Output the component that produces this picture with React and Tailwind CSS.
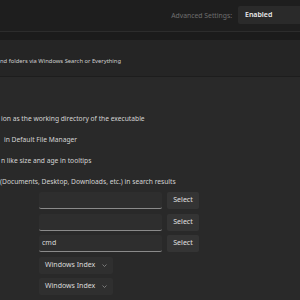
import React from 'react';

const font = { fontFamily: '"Noto Sans", "Open Sans", sans-serif' };

function PathRow({ value }) {
  return (
    <div className="flex items-center gap-[5px] h-[17px]">
      <div className="w-[123px] h-full bg-[#2e2e2e] rounded-[2px] border-b border-[#8a8a8a] flex items-center px-[3px] text-[7px] text-[#d8d8d8]">
        {value}
      </div>
      <button className="w-[32px] h-full bg-[#343434] rounded-[2px] text-[7px] text-[#e0e0e0] flex items-center justify-center">
        Select
      </button>
    </div>
  );
}

function IndexSelect() {
  return (
    <div className="w-[74px] h-[17px] bg-[#2f2f2f] rounded-[2px] flex items-center pl-[6px] text-[7px] text-[#dcdcdc]">
      <span>Windows Index</span>
      <svg className="ml-[7px]" width="5" height="3" viewBox="0 0 5 3" fill="none">
        <path d="M0.5 0.5 L2.5 2.5 L4.5 0.5" stroke="#9a9a9a" strokeWidth="0.7" />
      </svg>
    </div>
  );
}

export default function App() {
  return (
    <div style={font} className="w-[300px] h-[300px] overflow-hidden bg-[#292929] flex flex-col">
      {/* header */}
      <div className="h-[31px] shrink-0 bg-[#1e1e1e] flex items-center justify-end">
        <span className="text-[6.8px] text-[#6e6e6e] mr-[6px] mt-[2px]">Advanced Settings:</span>
        <div className="w-[62px] h-[18px] bg-[#2a2a2a] rounded-l-[2px] flex items-center pl-[7px] mt-[-1px] text-[7px] font-semibold text-[#ececec]">
          Enabled
        </div>
      </div>
      <div className="h-[9px] shrink-0 bg-[#1b1b1b] border-t border-[#2c2c2c]" />

      {/* search section */}
      <div className="h-[37px] shrink-0 bg-[#252525] border-b border-[#1d1d1d] pt-[17px] text-[5.8px] text-[#cfcfcf] whitespace-nowrap">
        nd folders via Windows Search or Everything
      </div>

      {/* options */}
      <div className="flex flex-col pt-[32px] text-[6.7px] text-[#d4d4d4] whitespace-nowrap">
        <div className="h-[21px] flex items-center pl-[1px]">ion as the working directory of the executable</div>
        <div className="h-[21px] flex items-center pl-[4px]">in Default File Manager</div>
        <div className="h-[21px] flex items-center pl-[1px]">n like size and age in tooltips</div>
        <div className="h-[21px] flex items-center">(Documents, Desktop, Downloads, etc.) in search results</div>
      </div>

      <div className="pl-[39px] mt-[-1px] flex flex-col gap-[4.5px]">
        <PathRow value="" />
        <PathRow value="" />
        <PathRow value="cmd" />
        <IndexSelect />
        <IndexSelect />
      </div>
    </div>
  );
}
